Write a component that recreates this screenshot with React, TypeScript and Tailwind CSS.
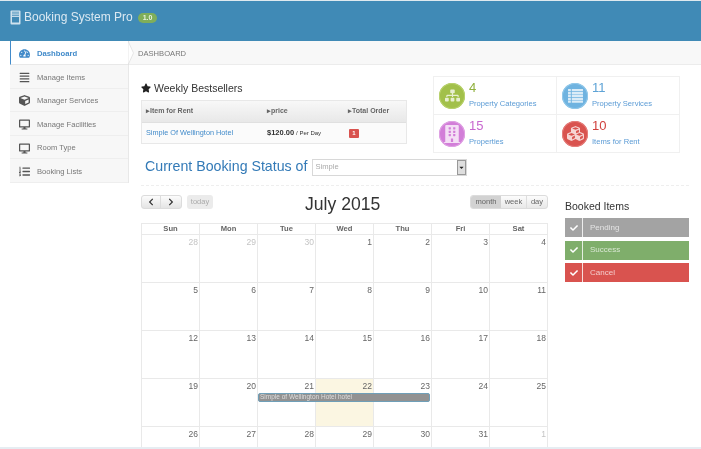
import { FaTachometerAlt, FaAlignJustify, FaCube, FaDesktop, FaListOl, FaStar, FaSitemap, FaBuilding, FaCubes, FaCheck, FaChevronLeft, FaChevronRight, FaCaretDown } from "react-icons/fa"

function TabletIcon({ className }: { className?: string }) {
  return (
    <svg className={className} viewBox="0 0 11 15" fill="none">
      <rect x="0.5" y="0.5" width="10" height="14" rx="1" fill="#cfe2ee" />
      <path d="M2 2.2h7M2 3.9h7M2 5.6h7" stroke="#408ab6" strokeWidth="0.8" />
      <rect x="2" y="7" width="7" height="5.5" fill="#408ab6" />
    </svg>
  )
}

function ListIcon({ className }: { className?: string }) {
  return (
    <svg className={className} viewBox="0 0 16 15" fill="currentColor">
      <path d="M0 0h3v2.4H0zM4 0h12v2.4H4zM0 3.1h3v2.4H0zM4 3.1h12v2.4H4zM0 6.2h3v2.4H0zM4 6.2h12v2.4H4zM0 9.3h3v2.4H0zM4 9.3h12v2.4H4zM0 12.4h3v2.4H0zM4 12.4h12v2.4H4z" />
    </svg>
  )
}

const navItems = [
  { label: "Manage Items", icon: FaAlignJustify },
  { label: "Manager Services", icon: FaCube },
  { label: "Manage Facilities", icon: FaDesktop },
  { label: "Room Type", icon: FaDesktop },
  { label: "Booking Lists", icon: FaListOl },
]

const stats = [
  { value: "4", label: "Property Categories", icon: FaSitemap, iconSize: "h-[15px] w-[15px]", circle: "bg-[#a2c04a] ring-[#b9d26e]", text: "text-[#8fb03c]" },
  { value: "11", label: "Property Services", icon: ListIcon, iconSize: "h-[14px] w-[15px]", circle: "bg-[#6fb3e0] ring-[#93c9ea]", text: "text-[#5ea3d6]" },
  { value: "15", label: "Properties", icon: FaBuilding, iconSize: "h-[18px] w-[16px]", circle: "bg-[#d27ed8] ring-[#e0a3e4]", text: "text-[#c868cf]" },
  { value: "10", label: "Items for Rent", icon: FaCubes, iconSize: "h-[17px] w-[17px]", circle: "bg-[#d9534f] ring-[#e57f7c]", text: "text-[#d0413d]" },
]

const weeks = [
  [28, 29, 30, 1, 2, 3, 4],
  [5, 6, 7, 8, 9, 10, 11],
  [12, 13, 14, 15, 16, 17, 18],
  [19, 20, 21, 22, 23, 24, 25],
  [26, 27, 28, 29, 30, 31, 1],
]

const days = ["Sun", "Mon", "Tue", "Wed", "Thu", "Fri", "Sat"]

const booked = [
  { label: "Pending", bg: "bg-[#a3a3a3]" },
  { label: "Success", bg: "bg-[#7fae6b]" },
  { label: "Cancel", bg: "bg-[#d9534f]" },
]

function Calendar() {
  return (
    <div className="w-[407px]">
      <div className="flex h-[29px] items-start">
        <div className="flex w-[164px] gap-[5px] pt-px">
          <div className="flex h-[14px] rounded-[3px] border border-[#dcdcdc] bg-gradient-to-b from-[#fcfcfc] to-[#e4e4e4] text-[#333]">
            <span className="flex w-[19px] items-center justify-center border-r border-[#dcdcdc]"><FaChevronLeft className="h-[8px] w-[8px]" /></span>
            <span className="flex w-[20px] items-center justify-center"><FaChevronRight className="h-[8px] w-[8px]" /></span>
          </div>
          <span className="flex h-[14px] w-[26px] items-center justify-center rounded-[3px] bg-[#ebebeb] text-[7.5px] text-[#aaa]">today</span>
        </div>
        <h2 className="text-[17.6px] leading-[20px] text-[#333]">July 2015</h2>
        <div className="ml-auto mt-px flex h-[14px] w-[78px] overflow-hidden rounded-[3px] border border-[#dcdcdc] bg-gradient-to-b from-[#fcfcfc] to-[#e8e8e8] text-[7.6px] text-[#666]">
          <span className="flex w-[30px] items-center justify-center bg-[#d2d2d2]">month</span>
          <span className="flex w-[26px] items-center justify-center border-r border-[#ddd]">week</span>
          <span className="flex flex-1 items-center justify-center">day</span>
        </div>
      </div>
      <div className="grid grid-cols-7 border-l border-t border-[#e9e9e9]">
        {days.map((d) => (
          <div key={d} className="h-[11px] border-b border-r border-[#e9e9e9] text-center text-[7.6px] font-bold leading-[10px] text-[#666]">{d}</div>
        ))}
      </div>
      {weeks.map((week, w) => (
        <div key={w} className="relative grid grid-cols-7 border-l border-[#e9e9e9]">
          {week.map((n, i) => {
            const muted = (w === 0 && i < 3) || (w === 4 && i === 6)
            const today = w === 3 && i === 3
            return (
              <div key={i} className={`h-[48px] border-b border-r border-[#e9e9e9] pr-[1px] pt-[1px] text-right text-[8.5px] leading-[12px] ${muted ? "text-[#c4c4c4]" : "text-[#666]"} ${today ? "bg-[#fbf6e2]" : ""}`}>
                {n}
              </div>
            )
          })}
          {w === 3 && (
            <div className="absolute left-[116px] top-[14px] h-[9px] w-[172px] truncate rounded-[2px] border border-[#6f9fb8] bg-[#929292] pl-px text-[6.5px] leading-[6px] text-[#ddd]">
              Simple of Wellington Hotel hotel
            </div>
          )}
        </div>
      ))}
    </div>
  )
}

export default function App() {
  return (
    <div className="relative flex h-[449px] w-[701px] flex-col overflow-hidden bg-white font-['Liberation_Sans',Arial,sans-serif] blur-[0.5px]">
      <header className="flex h-[41px] shrink-0 items-start border-t border-[#dfe9ef] bg-[#408ab6] pl-[10px] pt-[8px] text-[#dbe9f2]">
        <TabletIcon className="mt-px h-[15px] w-[11px]" />
        <span className="ml-[3px] text-[12px] leading-[16px]">Booking System Pro</span>
        <span className="ml-[5px] mt-[4px] rounded-full bg-[#7fae5a] px-[5px] text-[7px] font-bold leading-[10px] text-[#e8f2df]">1.0</span>
      </header>

      <div className="flex flex-1">
        <aside className="ml-[10px] h-[142px] w-[119px] shrink-0 border-r border-[#e8e8e8] bg-[#f7f7f7]">
          <div className="relative flex h-[24px] items-center gap-[7px] border-b border-l border-[#e8e8e8] border-l-[#428bca] bg-white pl-[8px] pt-[2px] text-[7.7px] font-bold text-[#428bca]">
            <FaTachometerAlt className="h-[11px] w-[11px]" />
            Dashboard
            <svg className="absolute -right-[6px] top-0" width="6" height="24" viewBox="0 0 6 24">
              <path d="M0 0 L5.5 12 L0 24 Z" fill="#fff" stroke="#dcdcdc" strokeWidth="0.7" />
            </svg>
          </div>
          {navItems.map((item) => (
            <div key={item.label} className="flex h-[23.6px] items-center gap-[7px] border-b border-[#eeeeee] pl-[9px] pt-[2px] text-[7.6px] text-[#777]">
              <item.icon className="h-[11px] w-[11px] text-[#555]" />
              {item.label}
            </div>
          ))}
        </aside>

        <main className="min-w-0 flex-1">
          <div className="flex h-[24px] items-center border-b border-[#ececec] bg-[#f8f8f8] pl-[9px] pt-[2px] text-[7.6px] text-[#777]">DASHBOARD</div>
          <div className="pl-[12px] pt-[11px]">
            <div className="flex h-[76px] items-start">
              <div className="w-[266px] pt-[5px]">
                <h3 className="flex items-center gap-[3px] text-[10.5px] leading-[14px] text-[#333]">
                  <FaStar className="h-[10px] w-[10px] text-[#222]" />
                  Weekly Bestsellers
                </h3>
                <div className="mt-[5px] border border-[#e8e8e8] text-[7px] text-[#666]">
                  <div className="flex h-[22px] items-center border-b border-[#e0e0e0] bg-gradient-to-b from-[#f8f8f8] to-[#e8e8e8] font-bold">
                    <span className="w-[121px] pl-[4px]">▸Item for Rent</span>
                    <span className="w-[81px] pl-[4px]">▸price</span>
                    <span className="pl-[4px]">▸Total Order</span>
                  </div>
                  <div className="flex h-[20px] items-center bg-[#fbfbfb]">
                    <span className="w-[121px] pl-[4px] text-[7.3px] text-[#428bca]">Simple Of Wellington Hotel</span>
                    <span className="w-[81px] pl-[4px] text-[#333]"><b className="text-[7.5px]">$120.00</b> <span className="text-[6px]">/ Per Day</span></span>
                    <span className="ml-[5px] flex h-[9px] w-[10px] items-center justify-center rounded-[1px] bg-[#d9534f] text-[6px] font-bold text-white">1</span>
                  </div>
                </div>
              </div>

              <div className="ml-[26px] grid w-[247px] grid-cols-2 border-l border-t border-[#f0f0f0]">
                {stats.map((s) => (
                  <div key={s.label} className="flex h-[38px] items-center gap-[4px] border-b border-r border-[#f0f0f0] pl-[5px]">
                    <span className={`flex h-[26px] w-[26px] shrink-0 items-center justify-center rounded-full text-white/75 ring-1 ring-inset ${s.circle}`}>
                      <s.icon className={s.iconSize} />
                    </span>
                    <span className="flex flex-col self-start pt-[3px]">
                      <span className={`text-[13px] leading-[15px] ${s.text}`}>{s.value}</span>
                      <span className="mt-[3px] text-[7.6px] leading-[11px] text-[#5b9bd5]">{s.label}</span>
                    </span>
                  </div>
                ))}
              </div>
            </div>

            <div className="mr-[12px] flex h-[34px] items-center border-b border-dashed border-[#eeeeee] pb-[3px] pl-[4px]">
              <h2 className="text-[14.2px] text-[#337ab7]">Current Booking Status of</h2>
              <div className="ml-[5px] flex h-[17px] w-[155px] items-center justify-between border border-[#d8d8d8] pl-[2px] text-[7.6px] text-[#aaa]">
                Simple
                <span className="flex h-full w-[9px] items-center justify-center border border-[#999] bg-[#dedede] text-[#222]"><FaCaretDown className="h-[7px] w-[7px]" /></span>
              </div>
            </div>

            <div className="flex pt-[8px]">
              <Calendar />
              <div className="ml-[17px] w-[124px] pt-[5px]">
                <h3 className="text-[10.5px] leading-[14px] text-[#333]">Booked Items</h3>
                <div className="mt-[5px] flex flex-col gap-[3.5px]">
                  {booked.map((b) => (
                    <div key={b.label} className={`flex h-[19px] items-center text-[8px] text-white/70 ${b.bg}`}>
                      <span className="flex h-full w-[18px] items-center justify-center border-r border-white/80 text-white"><FaCheck className="h-[8px] w-[8px]" /></span>
                      <span className="pl-[7px]">{b.label}</span>
                    </div>
                  ))}
                </div>
              </div>
            </div>
          </div>
        </main>
      </div>
      <div className="absolute bottom-0 left-0 h-[2px] w-full bg-[#e6edf2]" />
    </div>
  )
}
